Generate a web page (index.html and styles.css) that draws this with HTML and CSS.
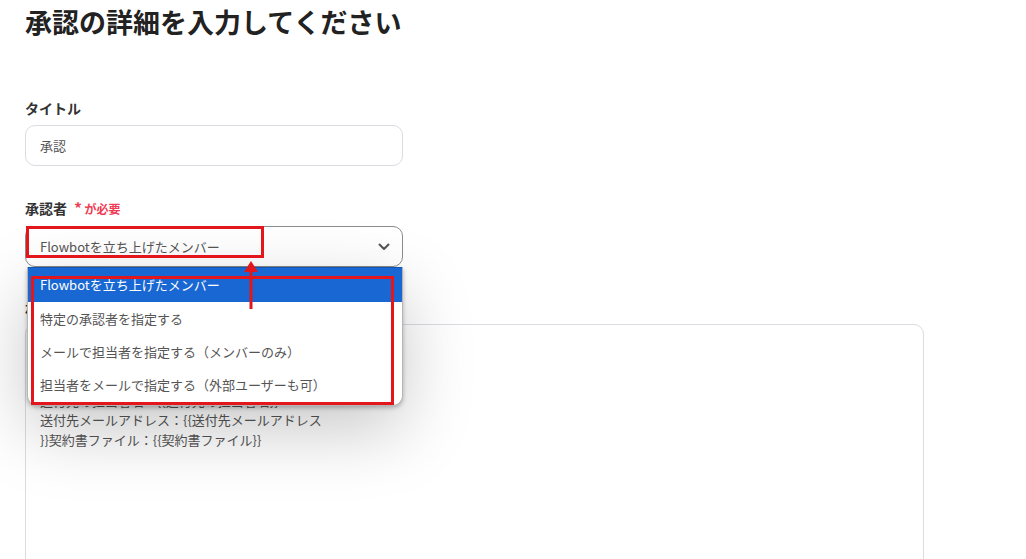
FILE: index.html
```html
<!DOCTYPE html>
<html lang="ja">
<head>
  <meta charset="UTF-8" />
  <meta name="viewport" content="width=device-width, initial-scale=1.0"/>
  <title>承認の詳細を入力してください</title>
  <link rel="stylesheet" href="styles.css">
</head>
<body>

  <div class="page">
    <h1>承認の詳細を入力してください</h1>

    <div class="field field-title">
      <label class="field-label">タイトル</label>
      <div class="input">承認</div>
    </div>

    <div class="field">
      <label class="field-label">承認者 <span class="required"><span class="star">*</span> が必要</span></label>
      <div class="select-wrap">
        <div class="select">
          <span>Flowbotを立ち上げたメンバー</span>
          <svg class="chevron" width="12" height="8" viewBox="0 0 12 8"><path d="M1.5 1.5 L6 6 L10.5 1.5" fill="none" stroke="#555" stroke-width="2" stroke-linecap="round" stroke-linejoin="round"/></svg>
        </div>

        <ul class="menu">
          <li class="menu-item active">Flowbotを立ち上げたメンバー</li>
          <li class="menu-item">特定の承認者を指定する</li>
          <li class="menu-item">メールで担当者を指定する（メンバーのみ）</li>
          <li class="menu-item">担当者をメールで指定する（外部ユーザーも可）</li>
        </ul>

        <!-- annotations -->
        <div class="mark mark-select"></div>
        <div class="mark mark-menu"></div>
        <svg class="mark-arrow" width="16" height="50" viewBox="0 0 16 50">
          <line x1="8" y1="10" x2="8" y2="48" stroke="#e3161c" stroke-width="3"/>
          <polygon points="8,0 15,11 1,11" fill="#e3161c"/>
        </svg>
      </div>
    </div>

    <div class="field field-body">
      <label class="field-label">承認内容</label>
      <div class="textarea">以下の契約書の承認をお願いします。

送付先企業名：{{送付先企業名}}
送付先の担当者名：{{送付先の担当者名}}
送付先メールアドレス：{{送付先メールアドレス
}}契約書ファイル：{{契約書ファイル}}</div>
    </div>
  </div>

</body>
</html>
```

FILE: styles.css
```css
body {
  margin: 0;
  font-family: "Noto Sans CJK JP", "Noto Sans", sans-serif;
  background-color: #fff;
  color: #333;
  overflow: hidden;
}

.page {
  padding: 0 25px;
  width: 899px;
}

h1 {
  font-size: 27px;
  line-height: 36px;
  font-weight: bold;
  color: #222;
  margin: 4px 0 0;
}

.field {
  display: flex;
  flex-direction: column;
  gap: 7px;
  margin-top: 32px;
}

.field-title {
  margin-top: 58px;
}

.field-body {
  margin-top: 30px;
}

.field-label {
  font-size: 14px;
  line-height: 20px;
  font-weight: bold;
  color: #333;
}

.required {
  color: #ef3b53;
  font-size: 12px;
  margin-left: 4px;
}

.star {
  font-size: 15px;
}

.input, .select {
  width: 378px;
  height: 41px;
  box-sizing: border-box;
  border-radius: 10px;
  padding: 0 14px;
  font-size: 13px;
  color: #555;
  display: flex;
  align-items: center;
}

.input {
  border: 1px solid #d9dce1;
}

.select-wrap {
  position: relative;
  width: 378px;
}

.select {
  border: 1px solid #8c8c8c;
  justify-content: space-between;
  padding-right: 12px;
}

.menu {
  position: absolute;
  top: 41px;
  left: 2px;
  right: 0;
  margin: 0;
  padding: 0 0 4px;
  list-style: none;
  background: #fff;
  border-radius: 0 0 10px 10px;
  border: 1px solid #b5b5b5;
  border-top: none;
  box-shadow: 0 2px 4px rgba(0, 0, 0, 0.25), 0 24px 70px rgba(0, 0, 0, 0.22);
  z-index: 2;
}

.menu-item {
  font-size: 13px;
  line-height: 33px;
  padding: 0 12px;
  color: #555;
  white-space: nowrap;
}

.menu-item.active {
  background: #1967d2;
  color: #fff;
  line-height: 34px;
  border-top: 1px solid #1256b5;
}

.mark {
  position: absolute;
  border: 3px solid #e3161c;
  z-index: 3;
}

.mark-select {
  left: 1px;
  top: 0;
  width: 232px;
  height: 26px;
}

.mark-menu {
  left: 6px;
  top: 50px;
  width: 357px;
  height: 123px;
}

.mark-arrow {
  position: absolute;
  left: 218px;
  top: 35px;
  z-index: 4;
}

.textarea {
  width: 899px;
  height: 260px;
  box-sizing: border-box;
  border: 1px solid #d9dce1;
  border-radius: 10px;
  padding: 7px 14px;
  font-size: 13px;
  line-height: 19.5px;
  color: #555;
  white-space: pre-wrap;
}
```
